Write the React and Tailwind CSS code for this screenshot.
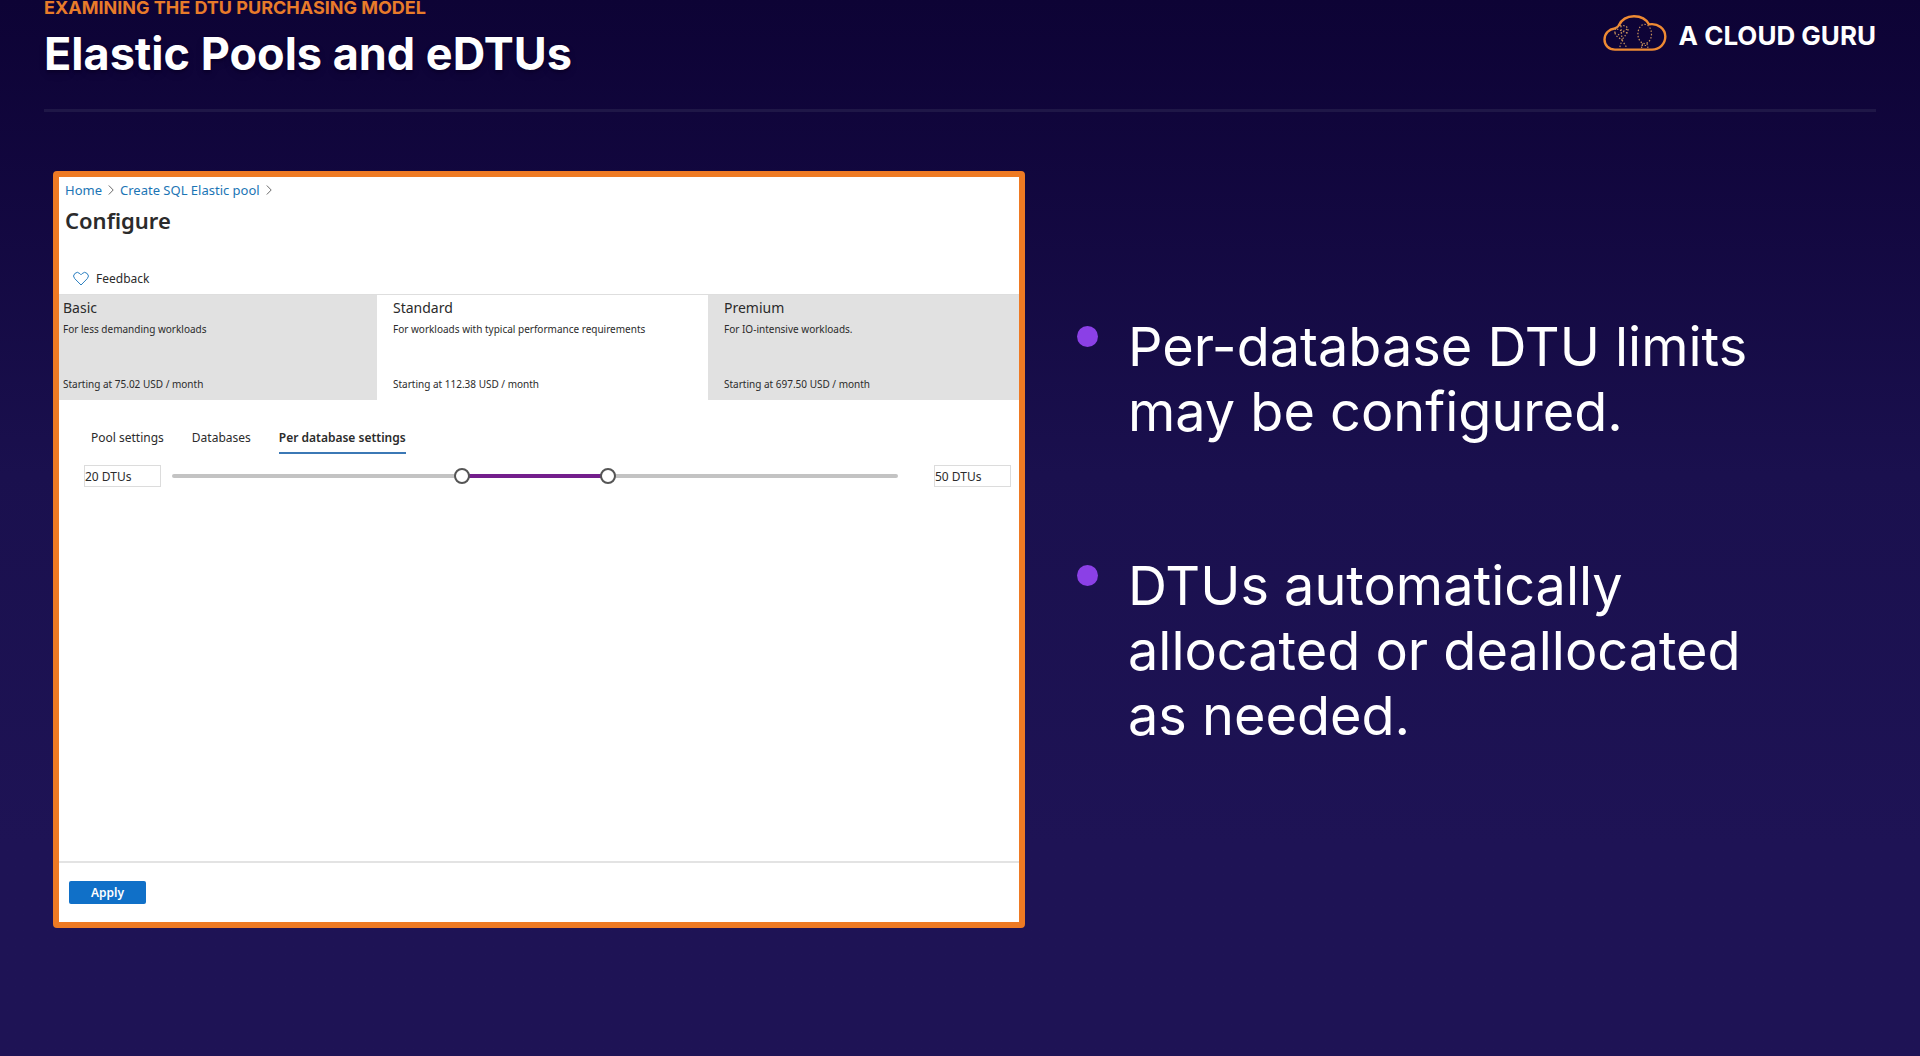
import { useState } from "react";

const DTU_STEPS = [0, 10, 20, 50, 100, 200];

const TIERS = [
  {
    name: "Basic",
    summary: "For less demanding workloads",
    price: "Starting at 75.02 USD / month",
    style: "bg-[#e1e1e1] pl-1",
  },
  {
    name: "Standard",
    summary: "For workloads with typical performance requirements",
    price: "Starting at 112.38 USD / month",
    style: "bg-white pl-4",
  },
  {
    name: "Premium",
    summary: "For IO-intensive workloads.",
    price: "Starting at 697.50 USD / month",
    style: "bg-[#e1e1e1] pl-4",
  },
];

const TABS = ["Pool settings", "Databases", "Per database settings"];

const POINTS = [
  "Per-database DTU limits may be configured.",
  "DTUs automatically allocated or deallocated as needed.",
];

function CloudLogo() {
  return (
    <svg viewBox="0 0 64 38" className="h-[38px] w-16" fill="none" aria-hidden="true">
      <path
        d="M12 35.6 C5.5 35.6 1.5 31 1.5 25.6 C1.5 19.5 6 15 11.5 14.5 C13.5 14 14.5 13.5 15.7 11.5 C18.5 5.5 24 2.2 31 2.2 C38 2.2 43.5 5.5 46 10.4 C55 8.8 62.3 15 62.3 22.6 C62.3 30 56.5 35.6 49 35.6 Z"
        stroke="#ee8a33"
        strokeWidth="2.4"
        strokeLinejoin="round"
      />
      <g stroke="#c9935a" strokeWidth="1.2" strokeDasharray="1.4 1.8">
        <ellipse cx="41.7" cy="20" rx="6.8" ry="9.6" />
        <path d="M39.5 29.5 L38.5 34 M44 29.5 L45 34 M38.5 31.5 H45" />
        <path d="M12 19 C11 14 16 11 20 11.5 C25 12 26 16 24 19 C22 22 20 24 19 26 L24 34 M12 19 C13 23 17 24 19 26 L16.5 34 M14 15 L24 19 M18 12 L19 26 M15 21 L24 15" />
      </g>
    </svg>
  );
}

function Chevron() {
  return (
    <svg viewBox="0 0 6 12" className="h-3 w-1.5" fill="none" stroke="#6b6b6b" aria-hidden="true">
      <path d="M0.8 1.5 L5.2 6 L0.8 10.5" />
    </svg>
  );
}

function HeartIcon() {
  return (
    <svg viewBox="0 0 16 16" className="size-4" fill="none" stroke="#2b7fc0" aria-hidden="true">
      <path d="M8 14 L1.7 7.6 A3.6 3.6 0 0 1 6.9 2.6 L8 3.8 L9.1 2.6 A3.6 3.6 0 0 1 14.3 7.6 Z" />
    </svg>
  );
}

const rangeClass =
  "pointer-events-none absolute inset-0 h-4 w-full appearance-none bg-transparent outline-none [&::-webkit-slider-thumb]:pointer-events-auto [&::-webkit-slider-thumb]:size-4 [&::-webkit-slider-thumb]:appearance-none [&::-webkit-slider-thumb]:rounded-full [&::-webkit-slider-thumb]:border-2 [&::-webkit-slider-thumb]:border-[#555] [&::-webkit-slider-thumb]:bg-white";

const boxClass =
  "h-[22px] w-[77px] border border-[#dcdcdc] bg-white text-xs text-[#2b2b2b] outline-none";

function DtuRange() {
  const [low, setLow] = useState(2);
  const [high, setHigh] = useState(3);
  const last = DTU_STEPS.length - 1;
  return (
    <div className="mt-[11px] flex items-center pr-2 pl-[25px]">
      <input aria-label="Minimum DTUs" readOnly value={`${DTU_STEPS[low]} DTUs`} className={boxClass} />
      <div className="relative mr-7 ml-[3px] h-4 flex-1">
        <div className="mx-2 flex h-4 items-center">
          <div className="relative h-1 w-full rounded-full bg-[#c3c3c3]">
            <div
              className="absolute h-1 bg-[#731e8c]"
              style={{ left: `${(low / last) * 100}%`, right: `${100 - (high / last) * 100}%` }}
            />
          </div>
        </div>
        <input
          type="range"
          aria-label="Minimum DTUs per database"
          min="0"
          max={last}
          value={low}
          onChange={(e) => setLow(Math.min(Number(e.target.value), high))}
          className={rangeClass}
        />
        <input
          type="range"
          aria-label="Maximum DTUs per database"
          min="0"
          max={last}
          value={high}
          onChange={(e) => setHigh(Math.max(Number(e.target.value), low))}
          className={rangeClass}
        />
      </div>
      <input aria-label="Maximum DTUs" readOnly value={`${DTU_STEPS[high]} DTUs`} className={boxClass} />
    </div>
  );
}

function ConfigurePanel() {
  const [tab, setTab] = useState(2);
  return (
    <section className="flex min-h-[757px] flex-col rounded-sm border-6 border-[#ee7a23] bg-white font-['Noto_Sans',sans-serif] text-[#2b2b2b]">
      <nav
        aria-label="Breadcrumb"
        className="flex items-center gap-1.5 px-1.5 pt-[3px] text-[13px] leading-5 text-[#1b75b5]"
      >
        <a href="#home">Home</a>
        <Chevron />
        <a href="#create">Create SQL Elastic pool</a>
        <Chevron />
      </nav>
      <h2 className="mt-1 px-1.5 text-[22px] leading-8 font-semibold">Configure</h2>
      <button type="button" className="mt-[33px] flex items-center gap-[7px] self-start px-3.5 text-xs leading-5">
        <HeartIcon />
        Feedback
      </button>
      <div className="mt-[5px] grid grid-cols-[318fr_331fr_311fr] border-t border-[#dedede]">
        {TIERS.map((t) => (
          <button type="button" key={t.name} className={`flex h-[105px] flex-col items-start text-left ${t.style}`}>
            <span className="mt-[3px] text-sm leading-5">{t.name}</span>
            <span className="mt-[3px] text-[10px] leading-4">{t.summary}</span>
            <span className="mt-auto mb-2 text-[10px] leading-4">{t.price}</span>
          </button>
        ))}
      </div>
      <div role="tablist" className="mt-7 flex gap-7 px-8">
        {TABS.map((name, i) => (
          <button
            type="button"
            role="tab"
            key={name}
            aria-selected={tab === i}
            onClick={() => setTab(i)}
            className={`border-b-2 pb-1 text-xs leading-5 ${
              tab === i ? "border-[#3b78b5] font-semibold" : "border-transparent"
            }`}
          >
            {name}
          </button>
        ))}
      </div>
      <DtuRange />
      <footer className="mt-auto border-t-2 border-[#e3e3e3] px-2.5 pt-[18px] pb-[18px]">
        <button
          type="button"
          className="block h-[23px] w-[77px] rounded-xs bg-[#1070c8] text-xs font-semibold text-white"
        >
          Apply
        </button>
      </footer>
    </section>
  );
}

export default function App() {
  return (
    <main className="min-h-screen bg-linear-to-b from-[#0d0335] via-[#1a104e] via-45% to-[#1e1355] to-80% px-11 pb-32 font-[Inter,sans-serif] text-white">
      <header className="flex items-start justify-between border-b-3 border-[#1f1747] pb-[27px]">
        <div>
          <p className="text-lg leading-4 font-bold text-[#e87b2a]">
            EXAMINING THE DTU PURCHASING MODEL
          </p>
          <h1 className="mt-2.5 text-[45px] leading-14 font-bold text-shadow-lg">Elastic Pools and eDTUs</h1>
        </div>
        <div className="mt-3.5 flex items-end gap-3">
          <CloudLogo />
          <span className="text-[26px] leading-8 font-bold">A CLOUD GURU</span>
        </div>
      </header>
      <div className="mt-[59px] grid grid-cols-[972fr_799fr] gap-[52px] pl-[9px]">
        <ConfigurePanel />
        <ul className="mt-[143px] flex flex-col gap-[109px] text-[54px] leading-[65px]">
          {POINTS.map((p) => (
            <li key={p} className="flex gap-[30px]">
              <span className="mt-3 size-[21px] shrink-0 rounded-full bg-[#8b40e6]" />
              <span className="max-w-[640px]">{p}</span>
            </li>
          ))}
        </ul>
      </div>
    </main>
  );
}
